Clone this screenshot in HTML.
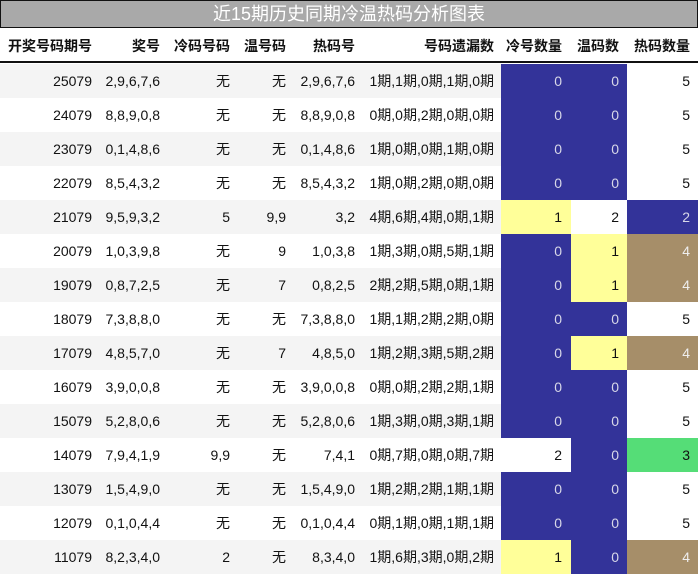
<!DOCTYPE html>
<html><head><meta charset="utf-8">
<style>
*{margin:0;padding:0;box-sizing:border-box}
body{width:698px;height:575px;overflow:hidden;background:#fff;font-family:"Liberation Sans","Noto Sans CJK SC",sans-serif;font-size:14px;color:#111}
.title{position:absolute;left:0;top:0;width:698px;height:28px;background:#a9a9a9;border:1px solid #111;color:#fff;font-size:18px;text-align:center;line-height:27px}
.row{position:absolute;left:0;width:698px;height:34px}
.c{position:absolute;top:0;height:34px;line-height:34px;text-align:right;white-space:nowrap}
.hd{top:28px;height:35px;border-bottom:2px solid #111;font-weight:bold;font-size:14px}
.hd .c{height:33px;line-height:37px}
.g{background:#f4f4f4}
.B{background:#333399;color:#d8d8e8}
.Y{background:#ffff99}
.W{background:#fff}
.R{background:#a68e69;color:#eee}
.G{background:#55dd77}
</style></head><body>
<div class="title">近15期历史同期冷温热码分析图表</div>
<div id="t"></div>
<script>
var L=[0,98,165,240,293,362,501,571,627,698],P=[6,5,10,7,7,7,9,8,8];
function row(top,cls,cells,bg){
 var h='<div class="row '+cls+'" style="top:'+top+'px">';
 for(var i=0;i<9;i++){h+='<div class="c '+((bg&&bg[i])||'')+'" style="left:'+L[i]+'px;width:'+(L[i+1]-L[i])+'px;padding-right:'+P[i]+'px">'+cells[i]+'</div>';}
 return h+'</div>';}
var H=row(28,'hd',['开奖号码期号','奖号','冷码号码','温号码','热码号','号码遗漏数','冷号数量','温码数','热码数量']);
var D=[
['25079','2,9,6,7,6','无','无','2,9,6,7,6','1期,1期,0期,1期,0期','0','0','5','BBW'],
['24079','8,8,9,0,8','无','无','8,8,9,0,8','0期,0期,2期,0期,0期','0','0','5','BBW'],
['23079','0,1,4,8,6','无','无','0,1,4,8,6','1期,0期,0期,1期,0期','0','0','5','BBW'],
['22079','8,5,4,3,2','无','无','8,5,4,3,2','1期,0期,2期,0期,0期','0','0','5','BBW'],
['21079','9,5,9,3,2','5','9,9','3,2','4期,6期,4期,0期,1期','1','2','2','YWB'],
['20079','1,0,3,9,8','无','9','1,0,3,8','1期,3期,0期,5期,1期','0','1','4','BYR'],
['19079','0,8,7,2,5','无','7','0,8,2,5','2期,2期,5期,0期,1期','0','1','4','BYR'],
['18079','7,3,8,8,0','无','无','7,3,8,8,0','1期,1期,2期,2期,0期','0','0','5','BBW'],
['17079','4,8,5,7,0','无','7','4,8,5,0','1期,2期,3期,5期,2期','0','1','4','BYR'],
['16079','3,9,0,0,8','无','无','3,9,0,0,8','0期,0期,2期,2期,1期','0','0','5','BBW'],
['15079','5,2,8,0,6','无','无','5,2,8,0,6','1期,3期,0期,3期,1期','0','0','5','BBW'],
['14079','7,9,4,1,9','9,9','无','7,4,1','0期,7期,0期,0期,7期','2','0','3','WBG'],
['13079','1,5,4,9,0','无','无','1,5,4,9,0','1期,2期,2期,1期,1期','0','0','5','BBW'],
['12079','0,1,0,4,4','无','无','0,1,0,4,4','0期,1期,0期,1期,1期','0','0','5','BBW'],
['11079','8,2,3,4,0','2','无','8,3,4,0','1期,6期,3期,0期,2期','1','0','4','YBR']];
for(var r=0;r<D.length;r++){var d=D[r],s=d[9];
 H+=row(64+r*34,r%2==0?'g':'',d,['','','','','','',s[0],s[1],s[2]]);}
document.getElementById('t').innerHTML=H;
</script>
</body></html>
